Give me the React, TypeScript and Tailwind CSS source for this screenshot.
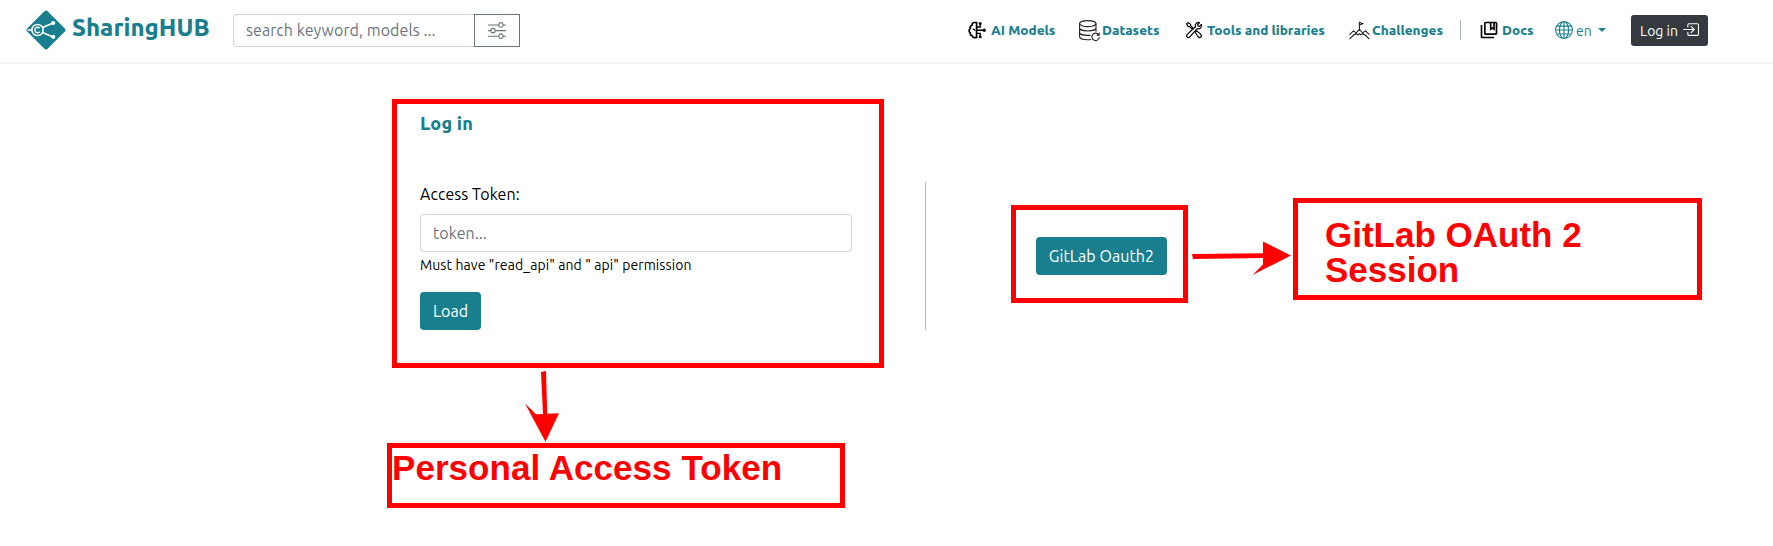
import React from "react";
import { BsSliders, BsGlobe, BsBoxArrowInRight } from "react-icons/bs";
import { MdOutlineCollectionsBookmark } from "react-icons/md";

function Logo() {
  return (
    <svg width="40" height="40" viewBox="0 0 40 40" fill="none" className="shrink-0">
      <path d="M18.6 1.1a2 2 0 0 1 2.8 0L38.9 18.6a2 2 0 0 1 0 2.8L21.4 38.9a2 2 0 0 1-2.8 0L1.1 21.4a2 2 0 0 1 0-2.8Z" fill="#197f8f" />
      <path d="M16.6 17.500 27 13M16.600 22.500 27 27M1.500 20H6" stroke="#fff" strokeWidth="1.7" />
      <circle cx="11.500" cy="20" r="5.600" stroke="#fff" strokeWidth="1.500" />
      <path d="M13.600 18.200a2.700 2.700 0 1 0 0 3.600" stroke="#fff" strokeWidth="1.400" />
      <circle cx="27.200" cy="13" r="2.100" fill="#fff" />
      <circle cx="27.200" cy="26.800" r="2.100" fill="#fff" />
    </svg>
  );
}

function BrainIcon() {
  return (
    <svg width="18" height="18" viewBox="0 0 18 18" fill="none" stroke="#000" strokeWidth="1.700" className="shrink-0">
      <path d="M8.600 17V1.500H6.400C4.800 1.500 4 2.800 4 4.200 2.200 5 2 6.600 2.300 7.400.6 8.800.7 11 2.300 12c-.1 1.800.9 2.700 1.900 2.900.3 1.200 1.200 1.700 2.200 1.700h2.200" />
      <path d="M4.800 8.200c1.200-.2 2 .5 2.100 1.500M8.600 9.200h7.200M8.600 6h3.600V3.400M8.600 12.400h3.600V15" strokeWidth="1.400" />
      <circle cx="12.200" cy="2.400" r="1.500" fill="#000" stroke="none" />
      <circle cx="16.200" cy="9.200" r="1.700" fill="#000" stroke="none" />
      <circle cx="12.200" cy="15.800" r="1.500" fill="#000" stroke="none" />
    </svg>
  );
}

function DatasetIcon() {
  return (
    <svg width="21" height="21" viewBox="0 0 21 21" fill="none" stroke="#222" strokeWidth="1.100" className="shrink-0">
      <ellipse cx="8.800" cy="3.600" rx="8.200" ry="3" />
      <path d="M.6 3.600v13.200c0 1.700 3.700 3 8.200 3 1.200 0 2.400-.1 3.400-.3M17 3.600v8.200M.6 8c0 1.700 3.700 3 8.200 3S17 9.700 17 8M.6 12.400c0 1.700 3.700 3 8.200 3 1 0 2-.1 2.800-.2" />
      <path d="M19.600 14.600a3.700 3.700 0 1 0 .7 2.400M20.200 12.600v2.500h-2.500" />
    </svg>
  );
}

function ToolsIcon() {
  return (
    <svg width="18" height="18" viewBox="0 0 18 18" fill="none" stroke="#000" strokeWidth="1.200" strokeLinejoin="round" className="shrink-0">
      <path d="M1.600 2.900 2.900 1.600 5.600 3.200v1.400l2.800 2.800-1 1-2.800-2.800H3.200Z" />
      <path d="m10.200 11.200 1.400-1.400 4.200 3.600c1.600 2-.8 4.200-2.600 2.600Z" />
      <path d="M14.600 1.600c-2.600-.8-5 1.600-4.200 4.200L2 13.600c-1.300 1.700.8 3.900 2.500 2.500L12.300 7.700c2.600.8 4.900-1.600 4.200-4.200l-2.100 1.900-1.300-.4-.4-1.300Z" />
    </svg>
  );
}

function MountainIcon() {
  return (
    <svg width="21" height="20" viewBox="0 0 21 20" fill="none" stroke="#222" strokeWidth="1.100" className="shrink-0">
      <path d="M10.400 9.500V1.800M10.400 2.200l3.400 1.500-3.400 1.400" />
      <path d="M5.200 15 10.400 9.400l5.200 5.600M6 14.600l1.500-.9 1.500 1.200 1.500-1.200 1.500 1.200 1.500-1.200 1.500.9" />
      <path d="m.5 14.600 3.900-3.700 2.600 1.700M20.400 14.600l-3.900-3.700-2.600 1.700M.5 19.200l4.800-4.700M20.400 19.200l-4.800-4.700" />
    </svg>
  );
}

function NavItem({ icon, label, className }: { icon: React.ReactNode; label: string; className: string }) {
  return (
    <a className={`flex items-center text-[13.5px] leading-none font-extrabold text-[#197f8f] whitespace-nowrap ${className}`}>
      {icon}
      <span className="pt-[2px]">{label}</span>
    </a>
  );
}

function Header() {
  return (
    <header className="flex h-16 items-center border-b-2 border-[#f3f3f4] pb-[2px] pl-[26px]">
      <a className="flex w-[207px] items-center gap-[6px]">
        <Logo />
        <span className="-mt-1 text-[24px] leading-none font-extrabold text-[#197f8f]">SharingHUB</span>
      </a>
      <div className="flex h-[33px] w-[287px]">
        <div className="flex w-[241px] items-center rounded-l-[4px] border border-r-0 border-[#ced4da] pl-3 text-base tracking-[0.07px] text-[#6c757d] whitespace-nowrap">
          search keyword, models ...
        </div>
        <div className="flex w-[46px] items-center justify-center border border-[#6c757d] text-[#6c757d]">
          <BsSliders size={18} />
        </div>
      </div>
      <nav className="flex flex-1 items-center pl-[448px]">
        <NavItem className="w-[111px] gap-[5px]" icon={<BrainIcon />} label="AI Models" />
        <NavItem className="w-[106px] gap-[2px]" icon={<DatasetIcon />} label="Datasets" />
        <NavItem className="w-[164px] gap-[4px]" icon={<ToolsIcon />} label="Tools and libraries" />
        <NavItem className="w-[111px] gap-[2px]" icon={<MountainIcon />} label="Challenges" />
        <div className="h-5 w-px bg-[#adb5bd]" />
        <NavItem className="ml-[18px] w-[76px] gap-[3px]" icon={<MdOutlineCollectionsBookmark size={20} color="#000" />} label="Docs" />
        <a className="flex w-[76px] items-center text-[14px] leading-none text-[#197f8f]">
          <BsGlobe size={18} />
          <span className="ml-[3px] pt-px">en</span>
          <span className="ml-[6px] border-x-4 border-t-4 border-x-transparent border-t-[#197f8f]" />
        </a>
        <button className="flex h-[31px] w-[77px] items-center gap-[5px] rounded-[3px] bg-[#343a40] pl-[9px] text-[14px] leading-none text-white whitespace-nowrap">
          <span className="pt-px">Log in</span>
          <BsBoxArrowInRight size={17} className="-mt-px -ml-px" />
        </button>
      </nav>
    </header>
  );
}

function Annotations() {
  return (
    <div className="pointer-events-none font-['Liberation_Sans'] text-[35px] leading-[35px] font-bold text-[#ff0000]">
      <div className="absolute top-[99px] left-[392px] h-[269px] w-[492px] border-5 border-[#ff0000]" />
      <div className="absolute top-[205px] left-[1011px] h-[98px] w-[177px] border-5 border-[#ff0000]" />
      <div className="absolute top-[198px] left-[1293px] h-[102px] w-[409px] border-5 border-[#ff0000] pt-[14px] pl-[27px]">
        GitLab OAuth 2<br />
        Session
      </div>
      <div className="absolute top-[443px] left-[387px] h-[65px] w-[458px] border-5 border-[#ff0000] pt-[2px] tracking-[0.05px] whitespace-nowrap">
        Personal Access Token
      </div>
      <svg className="absolute top-[240px] left-[1190px]" width="102" height="38" viewBox="1190 240 102 38" fill="#ff0000">
        <path d="M1192 254 1263 253.200V241.500L1291 255.500 1252.500 275 1263 264.500V258L1193 259Z" />
      </svg>
      <svg className="absolute top-[370px] left-[523px]" width="38" height="72" viewBox="523 370 38 72" fill="#ff0000">
        <path d="M541 372 546 371 547.200 413.700 559 413.300 545.500 441.700 525 403.500 536 414.300 543 414Z" />
      </svg>
    </div>
  );
}

export default function App() {
  return (
    <div className="relative h-[546px] w-[1773px] overflow-hidden bg-white font-['Ubuntu','Noto_Sans',sans-serif] text-black">
      <Header />
      <main className="flex pl-[420px]">
        <section className="w-[505px] pt-[47px]">
          <h1 className="text-[18px] leading-6 font-extrabold tracking-[0.2px] text-[#197f8f]">Log in</h1>
          <label className="mt-[47px] block text-base leading-6 tracking-[0.07px]">Access Token:</label>
          <div className="mt-2 flex h-[38px] w-[432px] items-center rounded-[4px] border border-[#ced4da] pl-3 text-base tracking-[0.07px] text-[#6c757d]">
            token...
          </div>
          <p className="mt-[2px] text-[14px] leading-[22px] tracking-[0.09px]">Must have "read_api" and " api" permission</p>
          <button className="mt-4 block h-[38px] w-[61px] rounded-[4px] bg-[#197f8f] text-base text-white">Load</button>
        </section>
        <div className="mt-[118px] h-[148px] w-px bg-[#adb5bd]" />
        <button className="mt-[173px] ml-[110px] h-[38px] w-[131px] rounded-[4px] bg-[#197f8f] text-base tracking-[0.07px] text-white whitespace-nowrap">
          GitLab Oauth2
        </button>
      </main>
      <Annotations />
    </div>
  );
}
